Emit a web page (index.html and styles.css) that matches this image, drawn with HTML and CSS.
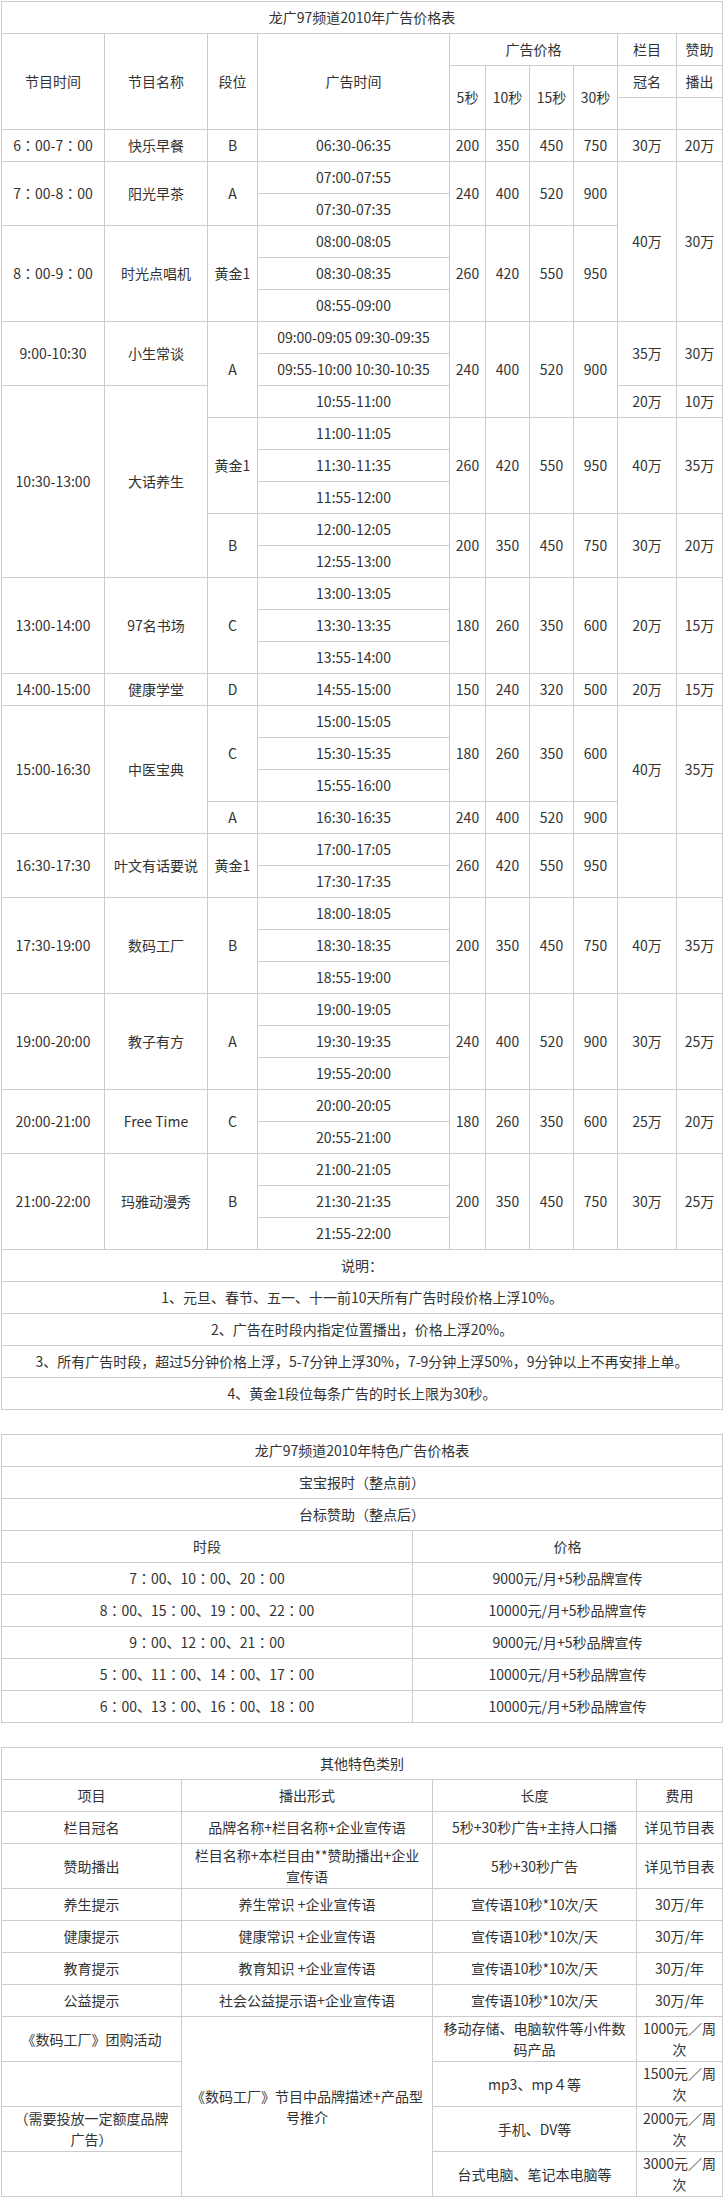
FILE: index.html
```html
<!DOCTYPE html>
<html lang="zh-CN">
<head>
<meta charset="utf-8">
<title>龙广97频道2010年广告价格表</title>
<link rel="stylesheet" href="styles.css">
</head>
<body>
<div class="page">
<table class="t t1">
<colgroup>
<col class="c103"><col class="c103"><col class="c50"><col class="c192"><col class="c36"><col class="c44"><col class="c44"><col class="c44"><col class="c59"><col class="c46">
</colgroup>
<tr><td colspan="10">龙广97频道2010年广告价格表</td></tr>
<tr><td rowspan="3">节目时间</td><td rowspan="3">节目名称</td><td rowspan="3">段位</td><td rowspan="3">广告时间</td><td colspan="4">广告价格</td><td>栏目</td><td>赞助</td></tr>
<tr><td rowspan="2">5秒</td><td rowspan="2">10秒</td><td rowspan="2">15秒</td><td rowspan="2">30秒</td><td>冠名</td><td>播出</td></tr>
<tr><td></td><td></td></tr>

<tr><td>6<span class="fc">：</span>00-7<span class="fc">：</span>00</td><td>快乐早餐</td><td>B</td><td>06:30-06:35</td><td>200</td><td>350</td><td>450</td><td>750</td><td>30万　</td><td>20万</td></tr>

<tr><td rowspan="2">7<span class="fc">：</span>00-8<span class="fc">：</span>00</td><td rowspan="2">阳光早茶</td><td rowspan="2">A</td><td>07:00-07:55</td><td rowspan="2">240</td><td rowspan="2">400</td><td rowspan="2">520</td><td rowspan="2">900</td><td rowspan="5">40万</td><td rowspan="5">30万</td></tr>
<tr><td>07:30-07:35</td></tr>

<tr><td rowspan="3">8<span class="fc">：</span>00-9<span class="fc">：</span>00</td><td rowspan="3">时光点唱机</td><td rowspan="3">黄金1</td><td>08:00-08:05</td><td rowspan="3">260</td><td rowspan="3">420</td><td rowspan="3">550</td><td rowspan="3">950</td></tr>
<tr><td>08:30-08:35</td></tr>
<tr><td>08:55-09:00</td></tr>

<tr><td rowspan="2">9:00-10:30</td><td rowspan="2">小生常谈</td><td rowspan="3">A</td><td>09:00-09:05 09:30-09:35</td><td rowspan="3">240</td><td rowspan="3">400</td><td rowspan="3">520</td><td rowspan="3">900</td><td rowspan="2">35万</td><td rowspan="2">30万</td></tr>
<tr><td>09:55-10:00 10:30-10:35</td></tr>
<tr><td rowspan="6">10:30-13:00</td><td rowspan="6">大话养生</td><td>10:55-11:00</td><td>20万　</td><td>10万</td></tr>

<tr><td rowspan="3">黄金1</td><td>11:00-11:05</td><td rowspan="3">260</td><td rowspan="3">420</td><td rowspan="3">550</td><td rowspan="3">950</td><td rowspan="3">40万</td><td rowspan="3">35万</td></tr>
<tr><td>11:30-11:35</td></tr>
<tr><td>11:55-12:00</td></tr>

<tr><td rowspan="2">B</td><td>12:00-12:05</td><td rowspan="2">200</td><td rowspan="2">350</td><td rowspan="2">450</td><td rowspan="2">750</td><td rowspan="2">30万　</td><td rowspan="2">20万</td></tr>
<tr><td>12:55-13:00</td></tr>

<tr><td rowspan="3">13:00-14:00</td><td rowspan="3">97名书场</td><td rowspan="3">C</td><td>13:00-13:05</td><td rowspan="3">180</td><td rowspan="3">260</td><td rowspan="3">350</td><td rowspan="3">600</td><td rowspan="3">20万</td><td rowspan="3">15万</td></tr>
<tr><td>13:30-13:35</td></tr>
<tr><td>13:55-14:00</td></tr>

<tr><td>14:00-15:00</td><td>健康学堂</td><td>D</td><td>14:55-15:00</td><td>150</td><td>240</td><td>320</td><td>500</td><td>20万　</td><td>15万</td></tr>

<tr><td rowspan="4">15:00-16:30</td><td rowspan="4">中医宝典</td><td rowspan="3">C</td><td>15:00-15:05</td><td rowspan="3">180</td><td rowspan="3">260</td><td rowspan="3">350</td><td rowspan="3">600</td><td rowspan="4">40万</td><td rowspan="4">35万</td></tr>
<tr><td>15:30-15:35</td></tr>
<tr><td>15:55-16:00</td></tr>
<tr><td>A</td><td>16:30-16:35</td><td>240</td><td>400</td><td>520</td><td>900</td></tr>

<tr><td rowspan="2">16:30-17:30</td><td rowspan="2">叶文有话要说</td><td rowspan="2">黄金1</td><td>17:00-17:05</td><td rowspan="2">260</td><td rowspan="2">420</td><td rowspan="2">550</td><td rowspan="2">950</td><td rowspan="2"></td><td rowspan="2"></td></tr>
<tr><td>17:30-17:35</td></tr>

<tr><td rowspan="3">17:30-19:00</td><td rowspan="3">数码工厂</td><td rowspan="3">B</td><td>18:00-18:05</td><td rowspan="3">200</td><td rowspan="3">350</td><td rowspan="3">450</td><td rowspan="3">750</td><td rowspan="3">40万</td><td rowspan="3">35万</td></tr>
<tr><td>18:30-18:35</td></tr>
<tr><td>18:55-19:00</td></tr>

<tr><td rowspan="3">19:00-20:00</td><td rowspan="3">教子有方</td><td rowspan="3">A</td><td>19:00-19:05</td><td rowspan="3">240</td><td rowspan="3">400</td><td rowspan="3">520</td><td rowspan="3">900</td><td rowspan="3">30万</td><td rowspan="3">25万</td></tr>
<tr><td>19:30-19:35</td></tr>
<tr><td>19:55-20:00</td></tr>

<tr><td rowspan="2">20:00-21:00</td><td rowspan="2">Free Time</td><td rowspan="2">C</td><td>20:00-20:05</td><td rowspan="2">180</td><td rowspan="2">260</td><td rowspan="2">350</td><td rowspan="2">600</td><td rowspan="2">25万</td><td rowspan="2">20万</td></tr>
<tr><td>20:55-21:00</td></tr>

<tr><td rowspan="3">21:00-22:00</td><td rowspan="3">玛雅动漫秀</td><td rowspan="3">B</td><td>21:00-21:05</td><td rowspan="3">200</td><td rowspan="3">350</td><td rowspan="3">450</td><td rowspan="3">750</td><td rowspan="3">30万</td><td rowspan="3">25万</td></tr>
<tr><td>21:30-21:35</td></tr>
<tr><td>21:55-22:00</td></tr>

<tr><td colspan="10">说明<span class="fc">：</span></td></tr>
<tr><td colspan="10">1、元旦、春节、五一、十一前10天所有广告时段价格上浮10%。</td></tr>
<tr><td colspan="10">2、广告在时段内指定位置播出，价格上浮20%。</td></tr>
<tr><td colspan="10">3、所有广告时段，超过5分钟价格上浮，5-7分钟上浮30%，7-9分钟上浮50%，9分钟以上不再安排上单。</td></tr>
<tr><td colspan="10">4、黄金1段位每条广告的时长上限为30秒。</td></tr>
</table>

<table class="t t2">
<colgroup><col class="c411"><col class="c310"></colgroup>
<tr><td colspan="2">龙广97频道2010年特色广告价格表</td></tr>
<tr><td colspan="2">宝宝报时（整点前）</td></tr>
<tr><td colspan="2">台标赞助（整点后）</td></tr>
<tr><td>时段</td><td>价格</td></tr>
<tr><td>7<span class="fc">：</span>00、10<span class="fc">：</span>00、20<span class="fc">：</span>00</td><td>9000元/月+5秒品牌宣传</td></tr>
<tr><td>8<span class="fc">：</span>00、15<span class="fc">：</span>00、19<span class="fc">：</span>00、22<span class="fc">：</span>00</td><td>10000元/月+5秒品牌宣传</td></tr>
<tr><td>9<span class="fc">：</span>00、12<span class="fc">：</span>00、21<span class="fc">：</span>00</td><td>9000元/月+5秒品牌宣传</td></tr>
<tr><td>5<span class="fc">：</span>00、11<span class="fc">：</span>00、14<span class="fc">：</span>00、17<span class="fc">：</span>00</td><td>10000元/月+5秒品牌宣传</td></tr>
<tr><td>6<span class="fc">：</span>00、13<span class="fc">：</span>00、16<span class="fc">：</span>00、18<span class="fc">：</span>00</td><td>10000元/月+5秒品牌宣传</td></tr>
</table>

<table class="t t3">
<colgroup><col class="c180"><col class="c251"><col class="c204"><col class="c86"></colgroup>
<tr><td colspan="4">其他特色类别</td></tr>
<tr><td>项目</td><td>播出形式</td><td>长度</td><td>费用</td></tr>
<tr><td>栏目冠名</td><td>品牌名称+栏目名称+企业宣传语</td><td>5秒+30秒广告+主持人口播</td><td>详见节目表</td></tr>
<tr><td>赞助播出</td><td>栏目名称+本栏目由**赞助播出+企业<br>宣传语</td><td>5秒+30秒广告</td><td>详见节目表</td></tr>
<tr><td>养生提示</td><td>养生常识 +企业宣传语</td><td>宣传语10秒*10次/天</td><td>30万/年</td></tr>
<tr><td>健康提示</td><td>健康常识 +企业宣传语</td><td>宣传语10秒*10次/天</td><td>30万/年</td></tr>
<tr><td>教育提示</td><td>教育知识 +企业宣传语</td><td>宣传语10秒*10次/天</td><td>30万/年</td></tr>
<tr><td>公益提示</td><td>社会公益提示语+企业宣传语</td><td>宣传语10秒*10次/天</td><td>30万/年</td></tr>
<tr><td>《数码工厂》团购活动</td><td rowspan="4">《数码工厂》节目中品牌描述+产品型<br>号推介</td><td>移动存储、电脑软件等小件数<br>码产品</td><td>1000元／周<br>次</td></tr>
<tr><td></td><td>mp3、mp４等</td><td>1500元／周<br>次</td></tr>
<tr><td>（需要投放一定额度品牌<br>广告）</td><td>手机、DV等</td><td>2000元／周<br>次</td></tr>
<tr><td></td><td>台式电脑、笔记本电脑等</td><td>3000元／周<br>次</td></tr>
</table>
</div>
</body>
</html>
```

FILE: styles.css
```css
html, body {
  margin: 0;
  padding: 0;
  background: #fff;
}
.page {
  padding: 1px 0 0 1px;
  width: 722px;
}
.t {
  border-collapse: collapse;
  table-layout: fixed;
  width: 722px;
  margin: 0 0 24px 0;
  font-family: "Noto Sans CJK SC", "Microsoft YaHei", sans-serif;
  font-size: 14px;
  line-height: 21px;
  color: #333;
}
.t td {
  border: 1px solid #ccc;
  padding: 1px 1px;
  height: 29px;
  text-align: center;
  vertical-align: middle;
  white-space: nowrap;
  overflow: hidden;
}
.fc {
  font-family: "Noto Sans CJK TC", "Noto Sans CJK SC", sans-serif;
}
.c103 { width: 103px; }
.c50 { width: 50px; }
.c192 { width: 192px; }
.c36 { width: 36px; }
.c44 { width: 44px; }
.c59 { width: 59px; }
.c46 { width: 46px; }
.c411 { width: 411px; }
.c310 { width: 310px; }
.c180 { width: 180px; }
.c251 { width: 251px; }
.c204 { width: 204px; }
.c86 { width: 86px; }
```
